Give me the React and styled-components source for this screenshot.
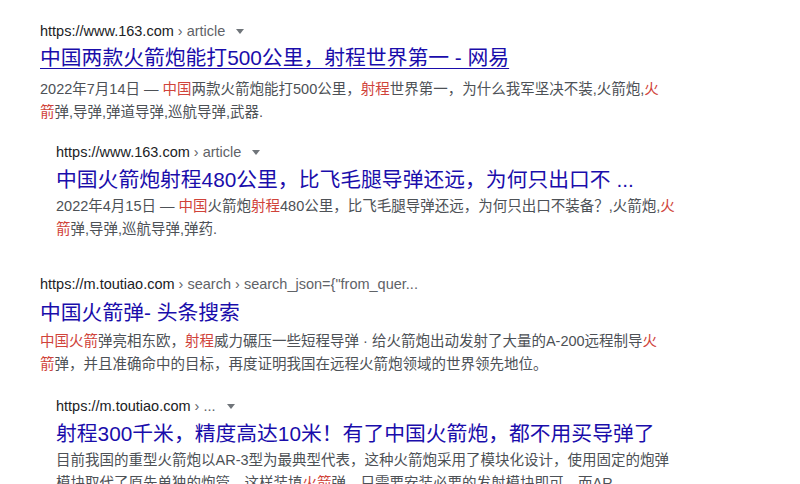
import React from 'react';
import styled, { createGlobalStyle } from 'styled-components';

const GlobalStyle = createGlobalStyle`
	html, body {
		margin: 0;
		padding: 0;
		background: #fff;
	}
	body {
		font-family: "Liberation Sans", Arial, "Noto Sans CJK SC", sans-serif;
	}
`;

const results = [
	{
		indent: 40,
		top: 20,
		underline: true,
		titleGap: 1,
		snippetGap: 5,
		domain: 'https://www.163.com',
		path: ['article'],
		arrow: true,
		title: '中国两款火箭炮能打500公里，射程世界第一 - 网易',
		lines: [
			[['2022年7月14日 — '], ['中国', true], ['两款火箭炮能打500公里，'], ['射程', true], ['世界第一，为什么我军坚决不装,火箭炮,'], ['火', true]],
			[['箭', true], ['弹,导弹,弹道导弹,巡航导弹,武器.']],
		],
	},
	{
		indent: 56,
		top: 18,
		titleGap: 2,
		snippetGap: 0,
		domain: 'https://www.163.com',
		path: ['article'],
		arrow: true,
		title: '中国火箭炮射程480公里，比飞毛腿导弹还远，为何只出口不 ...',
		lines: [
			[['2022年4月15日 — '], ['中国', true], ['火箭炮'], ['射程', true], ['480公里，比飞毛腿导弹还远，为何只出口不装备？,火箭炮,'], ['火', true]],
			[['箭', true], ['弹,导弹,巡航导弹,弹药.']],
		],
	},
	{
		indent: 40,
		top: 33,
		titleGap: 3,
		snippetGap: 2,
		domain: 'https://m.toutiao.com',
		path: ['search', 'search_json={"from_quer...'],
		arrow: false,
		title: '中国火箭弹- 头条搜索',
		lines: [
			[['中国火箭', true], ['弹亮相东欧，'], ['射程', true], ['威力碾压一些短程导弹 · 给火箭炮出动发射了大量的A-200远程制导'], ['火', true]],
			[['箭', true], ['弹，并且准确命中的目标，再度证明我国在远程火箭炮领域的世界领先地位。']],
		],
	},
	{
		indent: 56,
		top: 20,
		titleGap: 2,
		snippetGap: 0,
		domain: 'https://m.toutiao.com',
		path: ['...'],
		arrow: true,
		title: '射程300千米，精度高达10米！有了中国火箭炮，都不用买导弹了',
		lines: [
			[['目前我国的重型火箭炮以AR-3型为最典型代表，这种火箭炮采用了模块化设计，使用固定的炮弹']],
			[['模块取代了原先单独的炮管，这样装填'], ['火箭', true], ['弹，只需要安装必要的发射模块即可，而AR']],
		],
	},
];

const Page = styled.div`
	width: 800px;
	height: 484px;
	overflow: hidden;
	display: flex;
	flex-direction: column;
`;

const Result = styled.div`
	display: flex;
	flex-direction: column;
	padding-left: ${(p) => p.$indent}px;
	margin-top: ${(p) => p.$top}px;
`;

const UrlRow = styled.div`
	display: flex;
	align-items: center;
	height: 22px;
	font-size: 14.5px;
	white-space: nowrap;
	color: #202124;
`;

const Crumb = styled.span`
	color: #5f6368;
`;

const DropArrow = styled.span`
	width: 0;
	height: 0;
	margin-left: 11px;
	border-left: 4px solid transparent;
	border-right: 4px solid transparent;
	border-top: 5px solid #70757a;
`;

const Title = styled.a`
	display: block;
	margin-top: ${(p) => p.$gap}px;
	font-size: 20.8px;
	line-height: 30px;
	color: #1a0dab;
	white-space: nowrap;
	text-decoration: ${(p) => (p.$underline ? 'underline' : 'none')};
	text-decoration-thickness: 1px;
	text-underline-offset: 3px;
	cursor: pointer;
`;

const Snippet = styled.div`
	margin-top: ${(p) => p.$gap}px;
	font-size: 14.5px;
	line-height: 22.5px;
	color: #4d5156;
`;

const Line = styled.div`
	white-space: nowrap;
`;

const Em = styled.span`
	color: #d0433a;
`;

export default function App() {
	return (
		<>
			<GlobalStyle />
			<Page>
				{results.map((r, i) => (
					<Result key={i} $indent={r.indent} $top={r.top}>
						<UrlRow>
							{r.domain}
							{r.path.map((p) => (
								<Crumb key={p}>&nbsp;› {p}</Crumb>
							))}
							{r.arrow && <DropArrow />}
						</UrlRow>
						<Title $gap={r.titleGap} $underline={r.underline}>
							{r.title}
						</Title>
						<Snippet $gap={r.snippetGap}>
							{r.lines.map((line, j) => (
								<Line key={j}>
									{line.map(([text, hit], k) => (hit ? <Em key={k}>{text}</Em> : <span key={k}>{text}</span>))}
								</Line>
							))}
						</Snippet>
					</Result>
				))}
			</Page>
		</>
	);
}
